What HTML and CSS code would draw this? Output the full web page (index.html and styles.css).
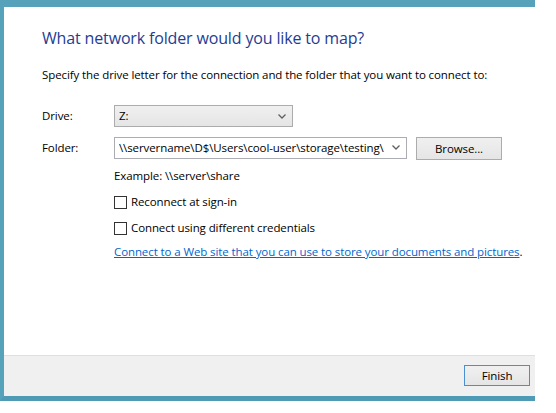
FILE: index.html
```html
<!DOCTYPE html>
<html>
<head>
<meta charset="utf-8">
<link rel="stylesheet" href="styles.css">
</head>
<body>
<div class="frame">
  <div class="content">
    <h1 class="title">What network folder would you like to map?</h1>
    <p class="intro">Specify the drive letter for the connection and the folder that you want to connect to:</p>
    <div class="form">
      <div class="label">Drive:</div>
      <div class="row">
        <div class="combo combo-drive"><span class="combo-text">Z:</span>
          <svg class="chev" width="8" height="5" viewBox="0 0 8 5"><path d="M0.5 0.5 L4 4 L7.5 0.5" fill="none" stroke="#606060" stroke-width="1.3"/></svg>
        </div>
      </div>
      <div class="label">Folder:</div>
      <div class="row">
        <div class="combo combo-folder"><span class="combo-text">\\servername\D$\Users\cool-user\storage\testing\</span>
          <svg class="chev" width="8" height="5" viewBox="0 0 8 5"><path d="M0.5 0.5 L4 4 L7.5 0.5" fill="none" stroke="#606060" stroke-width="1.3"/></svg>
        </div>
        <button class="btn btn-browse">Browse...</button>
      </div>
    </div>
    <div class="options">
      <div class="example">Example: \\server\share</div>
      <label class="check check-first"><span class="box"></span>Reconnect at sign-in</label>
      <label class="check check-second"><span class="box"></span>Connect using different credentials</label>
      <div class="link-line"><a class="link" href="#">Connect to a Web site that you can use to store your documents and pictures</a>.</div>
    </div>
  </div>
  <div class="footer">
    <button class="btn btn-default">Finish</button>
  </div>
</div>
</body>
</html>
```
FILE: styles.css
```css
html, body {
  margin: 0;
  padding: 0;
  background: #ffffff;
}
body {
  font-family: "Open Sans", "Noto Sans", sans-serif;
  font-size: 11.5px;
  letter-spacing: -0.1px;
  color: #000;
}
.frame {
  width: 535px;
  box-sizing: border-box;
  border-left: 4px solid #56a2bb;
  border-top: 7px solid #56a2bb;
  border-bottom: 5px solid #4f9ab4;
  display: flex;
  flex-direction: column;
}
.content {
  height: 348px;
  box-sizing: border-box;
  padding: 20px 0 0 38px;
  background: #fff;
}
.title {
  margin: 0;
  font-size: 16px;
  letter-spacing: -0.15px;
  line-height: 22px;
  font-weight: normal;
  color: #1e3d94;
}
.intro {
  margin: 18px 0 0 0;
  line-height: 16px;
}
.form {
  margin-top: 22px;
  display: grid;
  grid-template-columns: 72px auto;
  row-gap: 8px;
  align-items: center;
}
.label {
  line-height: 16px;
}
.row {
  display: flex;
  align-items: center;
}
.combo {
  height: 22px;
  box-sizing: border-box;
  border: 1px solid #acacac;
  display: flex;
  align-items: center;
  justify-content: space-between;
  padding: 0 6px 0 4px;
  line-height: 16px;
}
.combo-drive {
  width: 179px;
  background: linear-gradient(#f0f0f0, #e5e5e5);
}
.combo-folder {
  width: 293px;
  background: #fff;
  border-color: #abadb3;
}
.combo-text {
  white-space: nowrap;
  overflow: hidden;
}
.chev {
  flex: none;
}
.btn {
  font-family: inherit;
  font-size: 11.5px;
  letter-spacing: -0.1px;
  color: #000;
  height: 23px;
  box-sizing: border-box;
  border: 1px solid #acacac;
  background: linear-gradient(#f0f0f0, #e5e5e5);
  padding: 0;
  line-height: 16px;
}
.btn-browse {
  width: 86px;
  margin-left: 9px;
  margin-top: 2px;
}
.options {
  margin-left: 72px;
  margin-top: 8px;
}
.example {
  line-height: 16px;
}
.check {
  display: flex;
  align-items: center;
  line-height: 16px;
}
.check-first {
  margin-top: 10px;
}
.check-second {
  margin-top: 10px;
}
.box {
  width: 13px;
  height: 13px;
  box-sizing: border-box;
  border: 1px solid #333;
  background: #fff;
  margin-right: 4px;
  flex: none;
}
.link-line {
  margin-top: 8px;
  line-height: 16px;
  white-space: nowrap;
}
.link {
  color: #0066cc;
  text-decoration: underline;
}
.footer {
  height: 41px;
  box-sizing: border-box;
  border-top: 1px solid #dfdfdf;
  background: #f0f0f0;
  display: flex;
  justify-content: flex-end;
  align-items: flex-start;
  padding: 9px 5px 0 0;
}
.btn-default {
  width: 66px;
  height: 21px;
  border-color: #4a8fd0;
}
```
